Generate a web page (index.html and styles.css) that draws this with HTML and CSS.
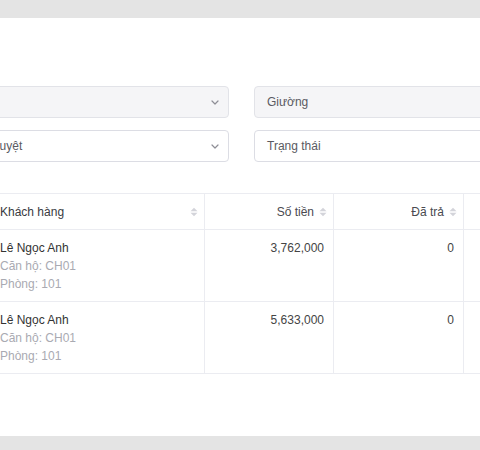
FILE: index.html
```html
<!DOCTYPE html>
<html lang="vi">
<head>
<meta charset="utf-8">
<title>Hóa đơn</title>
<link rel="stylesheet" href="styles.css">
</head>
<body>
<div class="card">
  <div class="filters">
    <div class="select disabled"><span class="val"></span><svg class="chev" width="8" height="5" viewBox="0 0 8 5"><polyline points="1,1 4,4 7,1"/></svg></div>
    <div class="select disabled"><span class="val">Giường</span></div>
    <div class="select"><span class="val">Trạng thái duyệt</span><svg class="chev" width="8" height="5" viewBox="0 0 8 5"><polyline points="1,1 4,4 7,1"/></svg></div>
    <div class="select"><span class="val">Trạng thái</span></div>
  </div>
  <div class="table">
    <div class="th first"><span>Khách hàng</span><svg class="sort" width="8" height="10" viewBox="0 0 8 10"><polygon points="4,0.8 7.5,4.3 0.5,4.3"/><polygon points="0.5,5.7 7.5,5.7 4,9.2"/></svg></div>
    <div class="th num"><span>Số tiền</span><svg class="sort" width="8" height="10" viewBox="0 0 8 10"><polygon points="4,0.8 7.5,4.3 0.5,4.3"/><polygon points="0.5,5.7 7.5,5.7 4,9.2"/></svg></div>
    <div class="th num"><span>Đã trả</span><svg class="sort" width="8" height="10" viewBox="0 0 8 10"><polygon points="4,0.8 7.5,4.3 0.5,4.3"/><polygon points="0.5,5.7 7.5,5.7 4,9.2"/></svg></div>
    <div class="th"></div>

    <div class="td first"><div class="name">Lê Ngọc Anh</div><div class="sub">Căn hộ: CH01</div><div class="sub">Phòng: 101</div></div>
    <div class="td num">3,762,000</div>
    <div class="td num">0</div>
    <div class="td"></div>

    <div class="td first"><div class="name">Lê Ngọc Anh</div><div class="sub">Căn hộ: CH01</div><div class="sub">Phòng: 101</div></div>
    <div class="td num">5,633,000</div>
    <div class="td num">0</div>
    <div class="td"></div>
  </div>
</div>
</body>
</html>
```
FILE: styles.css
```css
html, body {
  margin: 0;
  padding: 0;
}
body {
  background: #e4e4e4;
  font-family: "Liberation Sans", Arial, sans-serif;
  font-size: 12px;
  color: #333;
  overflow: hidden;
  height: 450px;
}
.card {
  background: #fff;
  margin-top: 18px;
  height: 418px;
  box-sizing: border-box;
  padding-top: 68px;
  overflow: hidden;
}
.filters {
  display: grid;
  grid-template-columns: 306px 306px;
  column-gap: 25px;
  row-gap: 12px;
  margin-left: -77px;
}
.select {
  box-sizing: border-box;
  height: 32px;
  border: 1px solid #dcdde4;
  border-radius: 4px;
  background: #fff;
  display: flex;
  align-items: center;
  justify-content: space-between;
  padding: 0 9px 0 12px;
  color: #5a5a62;
  font-size: 12px;
}
.select.disabled {
  background: #f5f5f7;
  border-color: #e2e3e8;
}
.chev {
  fill: none;
  stroke: #8e8e96;
  stroke-width: 1.2;
  stroke-linecap: round;
  stroke-linejoin: round;
}
.table {
  margin-top: 31px;
  margin-left: -9px;
  display: grid;
  grid-template-columns: 214px 129px 130px 150px;
  border-top: 1px solid #ebecf1;
}
.th, .td {
  box-sizing: border-box;
  border-right: 1px solid #ebecf1;
  border-bottom: 1px solid #ebecf1;
  line-height: 18px;
}
.th {
  padding: 9px 6px 8px 9px;
  display: flex;
  align-items: center;
  gap: 5px;
  color: #3a3a40;
}
.th.first {
  justify-content: space-between;
}
.th.num {
  justify-content: flex-end;
  color: #4a4a50;
}
.sort {
  fill: #d3d4da;
  flex: none;
}
.td {
  padding: 9px 9px 8px 9px;
  height: 72px;
}
.td.num {
  text-align: right;
  color: #444;
}
.name {
  color: #333;
}
.sub {
  color: #a9aab2;
}
```
